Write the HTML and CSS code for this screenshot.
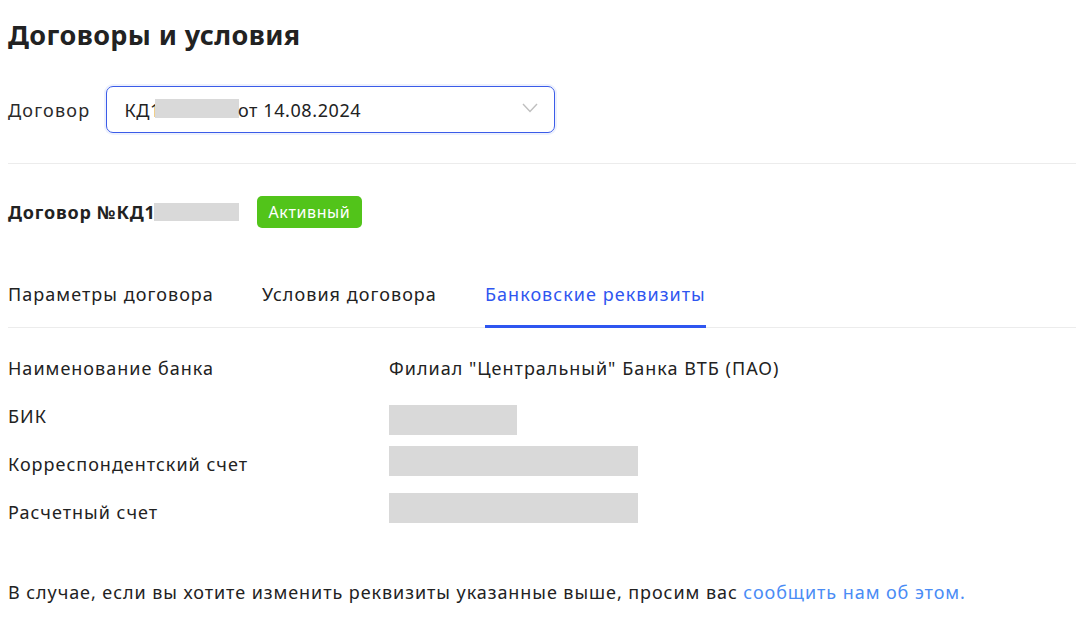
FILE: index.html
```html
<!DOCTYPE html>
<html lang="ru">
<head>
<meta charset="utf-8">
<link rel="stylesheet" href="styles.css">
</head>
<body>
<main class="page">
  <h1 class="title">Договоры и условия</h1>
  <div class="contract-select">
    <span class="select-label">Договор</span>
    <div class="select">
      <span class="select-value">КД1<span class="mask mask-select"></span>от 14.08.2024</span>
      <svg class="chevron" width="16" height="10" viewBox="0 0 16 10"><path d="M1 1 L8 8.5 L15 1" fill="none" stroke="#bfbfbf" stroke-width="1.4"/></svg>
    </div>
  </div>
  <hr class="divider">
  <div class="contract-head">
    <span class="contract-name">Договор №КД1<span class="mask mask-name"></span></span>
    <span class="badge">Активный</span>
  </div>
  <nav class="tabs">
    <span class="tab">Параметры договора</span>
    <span class="tab">Условия договора</span>
    <span class="tab active">Банковские реквизиты</span>
  </nav>
  <dl class="details">
    <div class="row"><dt>Наименование банка</dt><dd>Филиал "Центральный" Банка ВТБ (ПАО)</dd></div>
    <div class="row"><dt>БИК</dt><dd class="masked"><span class="mask mask-bik"></span></dd></div>
    <div class="row"><dt>Корреспондентский счет</dt><dd class="masked"><span class="mask mask-acc mask-corr"></span></dd></div>
    <div class="row"><dt>Расчетный счет</dt><dd class="masked"><span class="mask mask-acc mask-curr"></span></dd></div>
  </dl>
  <p class="note">В случае, если вы хотите изменить реквизиты указанные выше, просим вас <a class="link" href="#">сообщить нам об этом.</a></p>
</main>
</body>
</html>
```
FILE: styles.css
```css
* { box-sizing: border-box; }
body {
  margin: 0;
  background: #fff;
  font-family: "Noto Sans", "Open Sans", sans-serif;
  color: #1f1f1f;
}
.page { padding: 0 0 0 8px; }
.title {
  margin: 0;
  padding-top: 16px;
  font-size: 27px;
  letter-spacing: 0.4px;
  font-weight: 700;
  line-height: 38px;
  color: #222;
}
.contract-select {
  display: flex;
  align-items: center;
  margin-top: 32px;
  gap: 16px;
}
.select-label { font-size: 18px; letter-spacing: 1.2px; color: #2a2a2a; }
.select {
  width: 449px;
  height: 47px;
  border: 1px solid #3b5ce8;
  border-radius: 7px;
  box-shadow: 0 0 0 2px #edf1fd;
  display: flex;
  align-items: center;
  justify-content: space-between;
  padding: 0 16px 0 17px;
}
.select-value { font-size: 18px; letter-spacing: 0.6px; color: #222; display: flex; align-items: center; }
.mask { display: inline-block; background: #d9d9d9; }
.mask-select { width: 84px; height: 19px; margin-left: -6px; margin-right: -1px; margin-top: -2px; }
.chevron { margin-top: -4px; }
.divider {
  border: 0;
  border-top: 1px solid #ececec;
  margin: 30px 0 0 0;
}
.contract-head {
  display: flex;
  align-items: center;
  margin-top: 32px;
  gap: 18px;
}
.contract-name { font-size: 18px; letter-spacing: 0.8px; font-weight: 700; color: #222; display: flex; align-items: center; }
.mask-name { width: 85px; height: 18px; margin-left: -2px; }
.badge {
  background: #52c41a;
  color: #fff;
  font-size: 16px;
  letter-spacing: 0.6px;
  height: 32px;
  line-height: 32px;
  padding: 0 12px;
  border-radius: 5px;
}
.tabs {
  display: flex;
  gap: 48px;
  margin-top: 54px;
  border-bottom: 1px solid #ececec;
}
.tab {
  font-size: 18px;
  letter-spacing: 1.04px;
  color: #222;
  padding-bottom: 19px;
  border-bottom: 3px solid transparent;
  margin-bottom: -1px;
}
.tab.active { color: #2f56f0; border-bottom-color: #2f56f0; }
.details { margin: 16px 0 0 0; }
.row { display: flex; align-items: center; height: 48px; }
.row dt { width: 381px; font-size: 18px; letter-spacing: 1px; color: #222; }
.row dd { margin: 0; font-size: 18px; letter-spacing: 1px; color: #222; }
.row dd.masked { display: flex; }
.mask-bik { width: 128px; height: 30px; margin-top: 8px; }
.mask-acc { width: 249px; height: 30px; }
.mask-corr { margin-bottom: 6px; }
.mask-curr { margin-bottom: 8px; }
.note {
  margin: 44px 0 0 0;
  font-size: 18px;
  letter-spacing: 0.93px;
  color: #222;
}
.link { color: #4a8cf5; text-decoration: none; }
```
